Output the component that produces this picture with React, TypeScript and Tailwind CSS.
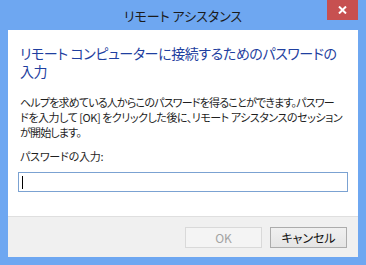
import React from "react";

const jp = "font-['Meiryo_UI','Noto_Sans_CJK_JP',sans-serif] [font-feature-settings:'palt']";

export default function App() {
  return (
    <div className={`flex h-[265px] w-[366px] flex-col overflow-hidden bg-[#6ea7f1] ${jp}`}>
      <div className="relative flex h-[30px] shrink-0 items-center justify-center">
        <span className="pt-[1px] text-[13px] leading-none text-[#1b1b1b]">
          リモート アシスタンス
        </span>
        <div className="absolute right-[8px] top-0 flex h-[20px] w-[31px] items-center justify-center bg-[#c75050]">
          <svg width="9" height="8" viewBox="0 0 9 8">
            <path d="M1 0.5 L8 7.5 M8 0.5 L1 7.5" stroke="#fff" strokeWidth="2" />
          </svg>
        </div>
      </div>

      <div className="mx-[8px] mb-[8px] flex min-h-0 flex-1 flex-col bg-white">
        <div className="flex shrink-0 flex-col px-[10px] pt-[14px] pb-[24px]">
          <h1 className="whitespace-nowrap pl-[2px] text-[14px] leading-[18px] tracking-[-0.4px] text-[#1f3fa0]">
            リモート コンピューターに接続するためのパスワードの
            <br />
            入力
          </h1>
          <p className="mt-[15px] whitespace-nowrap pl-[2px] text-[11px] leading-[15px] tracking-[-0.8px] text-[#1e1e1e]">
            ヘルプを求めている人からこのパスワードを得ることができます。パスワー
            <br />
            <span className="tracking-[-0.45px]">
              ドを入力して [OK] をクリックした後に、リモート アシスタンスのセッション
            </span>
            <br />
            が開始します。
          </p>
          <label className="mt-[9px] whitespace-nowrap pl-[2px] text-[11px] leading-[15px] tracking-[-0.2px] text-[#1e1e1e]">
            パスワードの入力:
          </label>
          <div className="mt-[8px] flex h-[20px] w-[330px] items-center border border-[#7ba2d2] pl-[3px]">
            <div className="h-[13px] w-[1px] bg-black" />
          </div>
        </div>

        <div className="flex flex-1 items-start justify-end gap-[8px] border-t border-[#dfdfdf] bg-[#f0f0f0] pr-[11px] pt-[10px]">
          <button className="flex h-[21px] w-[77px] items-center justify-center border border-[#d9d9d9] bg-[#f4f4f4] text-[12px] text-[#a3a3a3]">
            OK
          </button>
          <button className="flex h-[21px] w-[77px] items-center justify-center border border-[#acacac] bg-gradient-to-b from-[#f0f0f0] to-[#e5e5e5] text-[12px] text-[#111]">
            キャンセル
          </button>
        </div>
      </div>
    </div>
  );
}
